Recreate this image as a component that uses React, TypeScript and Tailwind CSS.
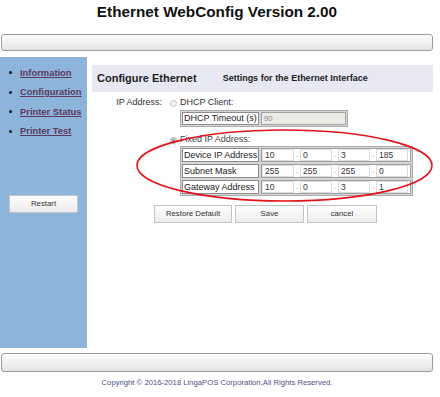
import React from "react";

const Radio = ({ checked }: { checked?: boolean }) => (
  <div
    className={
      "w-[7px] h-[7px] rounded-full border flex items-center justify-center mr-[3px] " +
      (checked ? "border-[#a8a8a8] bg-[#e2e2e2]" : "border-[#c4c4c4] bg-[#f3f3f3]")
    }
  >
    {checked ? <div className="w-[3px] h-[3px] rounded-full bg-[#8d8d8d]" /> : null}
  </div>
);

const Btn = ({ label, w }: { label: string; w: string }) => (
  <div
    className={
      w +
      " h-[18px] border border-[#c3c3c3] bg-linear-to-b from-white to-[#ebebeb] text-[7.8px] text-[#333] flex items-center justify-center"
    }
  >
    {label}
  </div>
);

const IpRow = ({ label, vals }: { label: string; vals: string[] }) => (
  <div className="flex gap-[2px] h-[14px]">
    <div className="w-[77px] h-[14px] border border-[#8c8c8c] bg-white text-[9px] leading-[12px] pl-[1px] text-[#222] whitespace-nowrap overflow-hidden">
      {label}
    </div>
    <div className="flex-1 h-[14px] border border-[#a0a0a0] bg-white flex items-center">
      {vals.map((v, i) => (
        <React.Fragment key={i}>
          {i > 0 ? (
            <div className="w-[6px] text-center text-[8px] leading-[12px] text-[#888]">.</div>
          ) : null}
          <div className="w-[32px] h-[12px] border border-[#dcdcdc] bg-white text-[8.5px] leading-[10px] pl-[2px] text-[#333]">
            {v}
          </div>
        </React.Fragment>
      ))}
    </div>
  </div>
);

export default function App() {
  const links = ["Information", "Configuration", "Printer Status", "Printer Test"];
  return (
    <div className="relative w-[440px] h-[397px] bg-white overflow-hidden font-['Liberation_Sans',Arial,sans-serif] text-[#222]">
      <div className="w-[434px]">
        <div className="h-[24px] leading-[24px] text-center text-[15.3px] font-bold text-[#111] mb-[10px]">
          Ethernet WebConfig Version 2.00
        </div>
        <div className="ml-[1px] w-[432px] h-[17px] rounded-[3px] border border-[#9c9c9c] bg-linear-to-b from-[#fdfdfd] to-[#e3e3e3]" />

        <div className="mt-[6px] flex h-[291px]">
          <div className="w-[87px] bg-[#8db4da] flex flex-col">
            <ul className="pt-[6px]">
              {links.map((l) => (
                <li key={l} className="h-[19.5px] flex items-center">
                  <div className="w-[3px] h-[3px] rounded-full bg-[#111] ml-[9px] mr-[8px]" />
                  <span className="text-[9.4px] font-bold underline text-[#5c3b5f] whitespace-nowrap">{l}</span>
                </li>
              ))}
            </ul>
            <div className="mt-[54px] ml-[9px]">
              <Btn label="Restart" w="w-[69px]" />
            </div>
          </div>

          <div className="flex-1 pl-[5px] pr-[1px]">
            <div className="mt-[8px] h-[27px] bg-[#e8e8f4] flex items-center pl-[5px]">
              <span className="text-[11px] font-bold text-[#222] whitespace-nowrap">Configure Ethernet</span>
              <span className="ml-[26px] text-[9px] font-bold text-[#222] whitespace-nowrap">
                Settings for the Ethernet Interface
              </span>
            </div>

            <div className="mt-[5px] h-[12px] flex items-center text-[9px]">
              <div className="w-[78px] text-right pr-[8px] text-[#333] whitespace-nowrap">IP Address:</div>
              <Radio />
              <span className="text-[#333] whitespace-nowrap">DHCP Client:</span>
            </div>

            <div className="mt-[1px] ml-[88px] w-[168px] h-[17px] border border-[#ababab] bg-[#d6d6d6] p-[1px] flex gap-[2px]">
              <div className="w-[77px] h-[13px] border border-[#8c8c8c] bg-white text-[9px] leading-[11px] pl-[1px] whitespace-nowrap overflow-hidden">
                DHCP Timeout (s)
              </div>
              <div className="flex-1 h-[13px] border border-[#a5a5a5] bg-[#ebebe6] text-[7.5px] leading-[11px] pl-[2px] text-[#8a8a8a]">
                90
              </div>
            </div>

            <div className="mt-[7px] h-[12px] flex items-center text-[9px]">
              <div className="w-[78px]" />
              <Radio checked />
              <span className="text-[#444] whitespace-nowrap">Fixed IP Address:</span>
            </div>

            <div className="ml-[88px] w-[233px] border border-[#ababab] bg-[#d6d6d6] p-[1px] flex flex-col gap-[2px]">
              <IpRow label="Device IP Address" vals={["10", "0", "3", "185"]} />
              <IpRow label="Subnet Mask" vals={["255", "255", "255", "0"]} />
              <IpRow label="Gateway Address" vals={["10", "0", "3", "1"]} />
            </div>

            <div className="mt-[9px] ml-[62px] flex gap-[3px]">
              <Btn label="Restore Default" w="w-[78px]" />
              <Btn label="Save" w="w-[69px]" />
              <Btn label="cancel" w="w-[70px]" />
            </div>
          </div>
        </div>

        <div className="mt-[5px] ml-[1px] w-[432px] h-[19px] rounded-[3px] border border-[#9c9c9c] bg-linear-to-b from-[#fdfdfd] to-[#e3e3e3]" />
        <div className="mt-[5px] text-center text-[7.7px] leading-[12px] text-[#4f4f86] whitespace-nowrap">
          Copyright © 2016-2018 LingaPOS Corporation,All Rights Reserved.
        </div>
      </div>

      <svg className="absolute left-0 top-0 pointer-events-none" width="440" height="397" viewBox="0 0 440 397">
        <ellipse cx="284.5" cy="165.5" rx="147.5" ry="35.5" fill="none" stroke="#e3131b" strokeWidth="1.6" />
      </svg>
    </div>
  );
}
